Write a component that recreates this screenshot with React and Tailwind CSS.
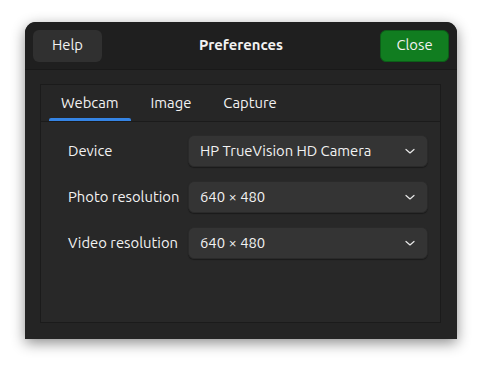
const Chevron = () => (
  <svg width="12" height="12" viewBox="0 0 12 12" className="shrink-0">
    <polyline points="2,4.5 6,8 10,4.5" fill="none" stroke="#e8e8e8" strokeWidth="1.2" strokeLinecap="round" strokeLinejoin="round" />
  </svg>
)

const Combo = ({ value }) => (
  <div className="flex items-center justify-between h-[32px] w-[240px] pl-[11px] pr-[11px] rounded-[6px] bg-[#343434] border border-[#2a2a2a] shadow-[0_1px_1px_rgba(0,0,0,0.35)]">
    <span>{value}</span>
    <Chevron />
  </div>
)

const App = () => {
  const rows = [
    { label: "Device", value: "HP TrueVision HD Camera" },
    { label: "Photo resolution", value: "640 × 480" },
    { label: "Video resolution", value: "640 × 480" },
  ]

  return (
    <div
      className="w-[482px] h-[367px] bg-white pt-[22px] pl-[25px] text-[#f2f2f2] text-[14.8px]"
      style={{ fontFamily: "Ubuntu, 'Noto Sans', 'Open Sans', sans-serif" }}
    >
      <div className="w-[432px] h-[317px] flex flex-col bg-[#242424] rounded-t-[11px] overflow-hidden shadow-[0_4px_14px_rgba(0,0,0,0.45)]">
        <div className="relative flex items-center justify-between h-[48px] px-[8px] bg-[#1f1f1f] border-b border-[#191919]">
          <button className="h-[32px] w-[69px] rounded-[6px] bg-[#303030]">Help</button>
          <div className="absolute left-0 right-0 text-center font-bold pointer-events-none">Preferences</div>
          <button className="h-[32px] w-[69px] rounded-[6px] bg-[#117d20] border border-[#0c5e18]">Close</button>
        </div>
        <div className="flex-1 pt-[14px] pl-[15px] pr-[16px] pb-[16px]">
          <div className="h-full flex flex-col border border-[#1b1b1b] bg-[#282828]">
            <div className="flex h-[37px] px-[8px] gap-[8px] border-b border-[#1b1b1b] bg-[#262626]">
              <div className="relative flex items-center px-[12px]">
                Webcam
                <div className="absolute left-0 right-0 bottom-0 h-[3px] rounded-t-[2px] bg-[#3584e4]" />
              </div>
              <div className="flex items-center px-[12px]">Image</div>
              <div className="flex items-center px-[12px]">Capture</div>
            </div>
            <div className="flex flex-col gap-[14px] pt-[13px] pl-[27px]">
              {rows.map((r) => (
                <div key={r.label} className="flex items-center">
                  <span className="w-[120px] whitespace-nowrap">{r.label}</span>
                  <Combo value={r.value} />
                </div>
              ))}
            </div>
          </div>
        </div>
      </div>
    </div>
  )
}

export default App
